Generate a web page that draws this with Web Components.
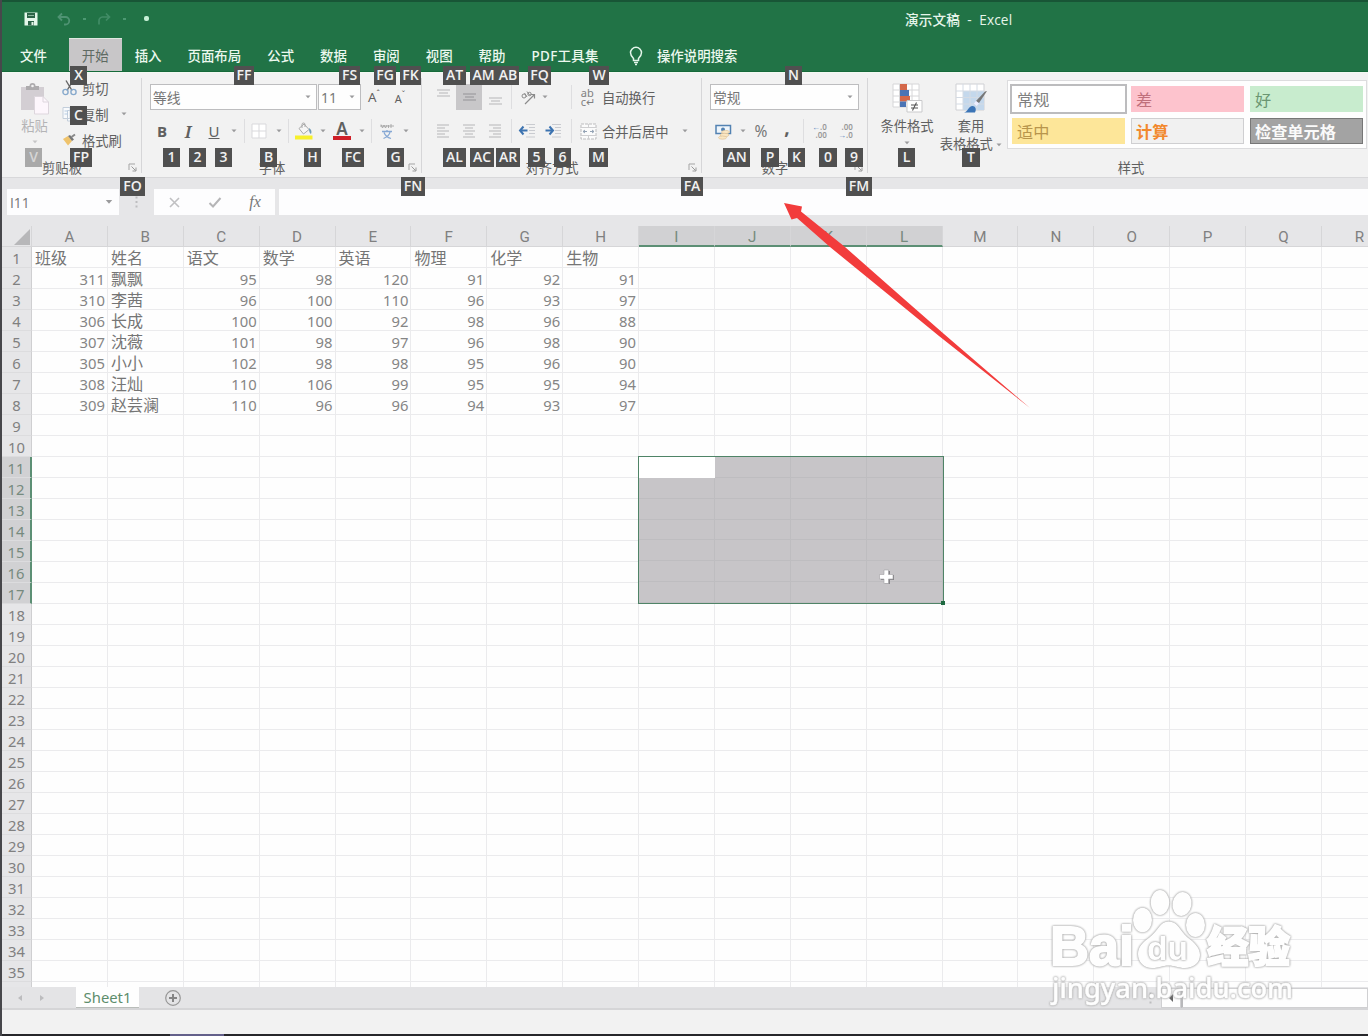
<!DOCTYPE html>
<html lang="zh-CN">
<head>
<meta charset="utf-8">
<title>演示文稿 - Excel</title>
<style>
html, body {
    margin: 0;
    height: 100%;
    overflow: hidden;
}
body {
    width: 1368px;
    height: 1036px;
    background: #2a2a2e;
    font-family: "Noto Sans", "Noto Sans CJK SC", sans-serif;
    font-size: 13.3px;
    color: #606060;
}
</style>
</head>
<body>
<excel-window></excel-window>

<script>
(function() {
    const svg = (w, h, body) => `<svg width="${w}" height="${h}" viewBox="0 0 ${w} ${h}" fill="none">${body}</svg>`;

    // horizontal strokes for the alignment buttons, as [x1, x2, y]
    const lines = (list) => svg(14, 16, list.map(([a, b, y]) => `<path d="M${a} ${y}H${b}" stroke="#c3c3c5" stroke-width="1.3"/>`).join(''));

    const ICONS = {
        save: svg(14, 14, '<path d="M.5.5H13.500V13.500H.5Z" fill="#e4f7ea"/><path d="M3 1H11V6H3Z" fill="#2c6448"/><path d="M4 3.500H10" stroke="#8fb8a0"/><path d="M4 9H10V13.500H4Z" fill="#2c6448"/><path d="M7.500 10H9.500V13H7.500Z" fill="#e4f7ea"/>'),
        undo: svg(14, 14, '<path d="M5 1.500 1.500 5 5 8.500M2 5H8.500A3.700 3.700 0 0 1 8.500 12.500H7" stroke="#4f9373" stroke-width="1.800"/>'),
        redo: svg(14, 14, '<path d="M9 1.500 12.500 5 9 8.500M12 5H5.500A3.700 3.700 0 0 0 2 9V12.500" stroke="#418c66" stroke-width="1.700"/>'),
        bulb: svg(14, 20, '<path d="M4.500 14.500V12.500C2.500 10.500 1.500 9 1.500 6.800A5.500 5.500 0 0 1 12.500 6.800C12.500 9 11.500 10.500 9.500 12.500V14.500Z" stroke="#e4f5ea" stroke-width="1.500"/><path d="M5 16.500H9M6 18.500H8" stroke="#e4f5ea" stroke-width="1.400"/>'),
        paste: svg(30, 32, '<path d="M1 4H24V27H1Z" fill="#d3ced3"/><path d="M6 7V3H9.500A3 3 0 0 1 15.500 3H19V7Z" fill="#adabad"/><circle cx="12.500" cy="3" r="1.300" fill="#f2f2f2"/><path d="M14.500 13.500H23L28.500 19V31H14.500Z" fill="#fdf6fc" stroke="#ddd6dd"/><path d="M23 13.500V19H28.500" stroke="#ddd6dd"/>'),
        cut: svg(15, 16, '<path d="M4 .5 10 10.500M11 .5 5 10.500" stroke="#666" stroke-width="1.400"/><circle cx="3.500" cy="12" r="2.600" stroke="#87a9cc" stroke-width="1.400"/><circle cx="11.500" cy="12" r="2.600" stroke="#87a9cc" stroke-width="1.400"/>'),
        copy: svg(15, 16, '<path d="M1 1.500H8V12.500H1ZM5.500 4.500H13V15H5.500Z" fill="#f8fafc" stroke="#c3cedb"/><path d="M2.500 5H6M2.500 8H6" stroke="#b5cbe2"/>'),
        brush: svg(15, 14, '<path d="M1 6 6 3 10 8 6 12.500Z" fill="#efc36c"/><path d="M6 3 8 2 12 6.500 10 8Z" fill="#777"/><path d="M9.500 4 13 1.500" stroke="#888" stroke-width="2"/>'),
        launcher: svg(9, 9, '<path d="M1 7V1H7" stroke="#a5a5a5"/><path d="M3.500 3.500 7.500 7.500M8 4.500V8H4.500" stroke="#999"/>'),
        borders: svg(16, 16, '<path d="M1 1H15V15H1ZM8 1V15M1 8H15" fill="#fff" stroke="#d9d9dc"/>'),
        fill: svg(18, 18, '<path d="M4 6.500 9 2 14 7.500 8.500 12Z" fill="#f6f6f6" stroke="#a9a9a9"/><path d="M7 6V2.500A1.500 1.500 0 0 1 10 2.500V5" stroke="#a9a9a9"/><path d="M14 6C16.500 7.500 17 9.500 16 12C14.500 11.500 14 9 14 6Z" fill="#6e9cb8"/><path d="M0 13.500H17.500V17.500H0Z" fill="#f7f02c"/>'),
        phonetic: svg(16, 17, '<path d="M1 3H15M2 1.500 3.500 5 5 2 6.500 5 8 2M9.500 5V2M12 1V5" stroke="#a5a5a5" stroke-width=".9"/><path d="M3 8.500H13M8 7V9M4.500 15.500C8 14 10.500 12 11 9M5 9.500C6 12 8.500 14.500 12 15.500" stroke="#86a8d4" stroke-width="1.300"/>'),
        top: lines([[1, 14, 1], [3, 12, 4], [1, 14, 7]]),
        middle: lines([[1, 14, 5], [3, 12, 8], [1, 14, 11]]).replace(/#c3c3c5/g, '#a0a0a2'),
        bottom: lines([[1, 14, 9], [3, 12, 12], [1, 14, 15]]),
        left: lines([[1, 13, 2], [1, 9, 5], [1, 13, 8], [1, 9, 11], [1, 13, 14]]),
        center: lines([[1, 13, 2], [3, 11, 5], [1, 13, 8], [3, 11, 11], [1, 13, 14]]),
        right: lines([[1, 13, 2], [5, 13, 5], [1, 13, 8], [5, 13, 11], [1, 13, 14]]),
        orient: svg(16, 16, '<path d="M5 15 14 6M10.500 5.500H14.500V9.500" stroke="#8b8b8b" stroke-width="1.200"/><circle cx="4" cy="7" r="2" stroke="#8b8b8b"/><path d="M4.500 4 7 8M7 2.500 10 6.500" stroke="#8b8b8b"/><circle cx="9.500" cy="5" r="1.700" stroke="#8b8b8b"/>'),
        outdent: svg(18, 16, '<path d="M8 1.500H17M11 4.500H17M11 7.500H17M11 10.500H17M8 14H17" stroke="#c9cbd0" stroke-width="1.200"/><path d="M5.500 3.500 2 7.500 5.500 11.500M2.500 7.500H9.500" stroke="#3c73b0" stroke-width="2"/>'),
        indent: svg(18, 16, '<path d="M8 1.500H17M11 4.500H17M11 7.500H17M11 10.500H17M8 14H17" stroke="#c9cbd0" stroke-width="1.200"/><path d="M5.500 3.500 9 7.500 5.500 11.500M8.500 7.500H1.500" stroke="#3c73b0" stroke-width="2"/>'),
        merge: svg(17, 17, '<path d="M1 1H16V16H1Z" fill="#fbfbfb" stroke="#bcbcbe" stroke-dasharray="3 1"/><path d="M1 4.500H16M1 12.500H16M8.500 1V4.500M8.500 12.500V16" stroke="#cfcfd1"/><path d="M3 8.500H7M10 8.500H14M5 7 3 8.500 5 10M12 7 14 8.500 12 10" stroke="#94a3b5"/>'),
        currency: svg(17, 17, '<path d="M1 2.500H15.500V10.500H1Z" fill="#eef5fb" stroke="#5382b2" stroke-width="1.500"/><circle cx="8" cy="6.500" r="2" fill="#5382b2"/><ellipse cx="10.500" cy="9" rx="4" ry="1.600" fill="#fae7c4" stroke="#dfc396" stroke-width=".7"/><ellipse cx="9.500" cy="12" rx="4.500" ry="1.700" fill="#fae7c4" stroke="#dfc396" stroke-width=".7"/><ellipse cx="7.500" cy="14.600" rx="4" ry="1.600" fill="#fae7c4" stroke="#dfc396" stroke-width=".7"/>'),
        cond: svg(31, 31, '<path d="M1 1H27V24H1Z" fill="#fff" stroke="#d6d6d8"/><path d="M1 7H27M1 13H27M1 19H27M7.500 1V24M20 1V24" stroke="#d6d6d8"/><path d="M8 1H15V7H8ZM8 13H18V18.500H8Z" fill="#d4684a"/><path d="M8 7H17V13H8ZM8 18.500H14V24H8Z" fill="#4b74b5"/><path d="M15 17.500H30V29H15Z" fill="#fff" stroke="#c9c9cb"/><path d="M19 22H26M19 25H26M24.500 19.500 20.500 27.500" stroke="#555" stroke-width="1.100"/>'),
        table: svg(33, 31, '<path d="M1 1H29V27H1Z" fill="#fff" stroke="#cfd0d4"/><path d="M8 8H29V27H8Z" fill="#c4d8ec"/><path d="M1 8H29M1 14.500H29M1 21H29M8 1V27M15 1V27M22 1V27" stroke="#d4dbe4"/><path d="M32 8 24 20 21 18 30 8.500Z" fill="#777"/><path d="M21 18 24 20.500 21.500 23 19 20.500Z" fill="#eef"/><path d="M9 29.500C13 28.500 13 24 17 23 20 22.500 22 26 20 29.500Z" fill="#3b74b6"/>'),
        cross: svg(13, 13, '<path d="M2 2 11 11M11 2 2 11" stroke="#c0c0c2" stroke-width="1.600"/>'),
        check: svg(14, 13, '<path d="M1.500 7 5 10.500 12.500 2" stroke="#b5b5b7" stroke-width="2"/>'),
        plus: svg(18, 18, '<circle cx="9" cy="9" r="7.300" stroke="#979797" stroke-width="1.200"/><path d="M9 5V13M5 9H13" stroke="#858585" stroke-width="2"/>'),
        grip: svg(3, 12, '<path d="M.5.5H2.500V2.500H.5ZM.5 5H2.500V7H.5ZM.5 9.500H2.500V11.500H.5Z" fill="#bdbdbf"/>'),
        prev: svg(6, 8, '<path d="M5 1V7L1 4Z" fill="#bcbcbe"/>'),
        next: svg(6, 8, '<path d="M1 1V7L5 4Z" fill="#bcbcbe"/>'),
        scroll: svg(6, 8, '<path d="M5 0V8L1 4Z" fill="#666"/>'),
        drop: svg(6, 4, '<path d="M.5.5H5.500L3 3.300Z" fill="#9a9a9c"/>')
    };

    /**
     * Register an element whose shadow root is cloned from a template.
     */
    function define(name, html, setup) {
        const template = document.createElement('template');
        template.innerHTML = html;

        customElements.define(name, class extends HTMLElement {
            constructor() {
                super();
                this.attachShadow({mode: 'open'});
                this.shadowRoot.appendChild(template.content.cloneNode(true));
            }

            connectedCallback() {
                if (setup) {
                    setup(this, this.shadowRoot);
                }
            }
        });
    }

    define('tool-icon', `
<style>
:host { display: inline-flex; align-items: center; justify-content: center; }
svg { display: block; }
</style>
<span></span>`, (host, root) => {
        root.querySelector('span').innerHTML = ICONS[host.getAttribute('name')];
    });

    define('tool-sep', `
<style>
:host { display: block; justify-self: center; width: 1px; height: 24px; background: #dedee0; }
</style>`);

    define('combo-box', `
<style>
:host {
    box-sizing: border-box;
    display: flex;
    align-items: center;
    justify-content: space-between;
    height: 26px;
    padding: 0 5px 0 2px;
    border: 1px solid #bdbdbf;
    background: #fefefe;
    color: #777;
    font-size: 13.8px;
}
</style>
<slot></slot><tool-icon name="drop"></tool-icon>`);

    define('key-tip', `
<style>
:host {
    position: absolute;
    box-sizing: border-box;
    height: 19px;
    background: #505050;
    color: #f1f1f1;
    font: 600 14px/18px "Open Sans", "Noto Sans", sans-serif;
    text-align: center;
    white-space: nowrap;
    z-index: 2;
}
:host([faded]) { background: #a9a9a9; color: #d6d6d6; }
</style>
<slot></slot>`);

    define('title-bar', `
<style>
:host { display: flex; align-items: center; height: 38px; box-sizing: border-box; border-top: 2px solid #185536; padding-bottom: 3px; background: #217346; color: #e6f5ea; }
.quick { display: grid; grid-template-columns: 23px 38px 8px 32px 8px 36px; justify-items: center; align-items: center; width: 180px; padding-left: 17px; box-sizing: border-box; }
.quick tool-icon[name=undo] { margin-left: 6px; }
.dot { width: 3px; height: 2px; background: #4c9872; }
.dot.on { width: 5px; height: 5px; border-radius: 2px; background: #c6f0d6; }
.name { margin-left: 723px; white-space: pre; font-size: 13.6px; font-weight: 500; letter-spacing: .15px; font-family: "Open Sans", "Noto Sans CJK SC", sans-serif; }
</style>
<div class="quick">
    <tool-icon name="save"></tool-icon>
    <tool-icon name="undo"></tool-icon>
    <i class="dot"></i>
    <tool-icon name="redo"></tool-icon>
    <i class="dot"></i>
    <i class="dot on"></i>
</div>
<div class="name">演示文稿  -  Excel</div>`);

    define('ribbon-tabs', `
<style>
:host { display: flex; height: 34px; background: #217346; color: #ecf8ef; font-weight: 500; border-bottom: 1px solid #166a3a; box-sizing: border-box; }
span { display: flex; align-items: center; padding: 0 13px; white-space: nowrap; font-size: 13.430px; }
.file { padding: 0 20px 0 18px; margin-right: 2px; }
.on { background: #c8c6c8; color: #5e6a62; font-weight: 400; box-shadow: inset 0 1px #dfe8e0; }
.pdf { letter-spacing: .35px; }
tool-icon { margin: 2px 1px 0 17px; }
</style>
<span class="file">文件</span><span class="on">开始</span><span>插入</span><span>页面布局</span><span>公式</span><span>数据</span><span>审阅</span><span>视图</span><span>帮助</span><span class="pdf">PDF工具集</span>
<tool-icon name="bulb"></tool-icon><span>操作说明搜索</span>`);

    define('ribbon-group', `
<style>
:host { display: grid; grid-template-rows: 84px 20px; box-sizing: border-box; position: relative; flex: none; }
:host(:not([last]))::after { content: ""; position: absolute; right: 0; top: 5px; bottom: 4px; width: 1px; background: #d6d6d8; }
footer { display: flex; align-items: center; padding-right: var(--launcher-gap, 0); }
b { flex: 1; text-align: center; font-weight: 400; color: #606060; font-size: 13.3px; }
footer tool-icon { width: 20px; margin-top: 1px; }
:host([last]) footer tool-icon { display: none; }
</style>
<slot></slot>
<footer><b></b><tool-icon name="launcher"></tool-icon></footer>`, (host, root) => {
        root.querySelector('b').textContent = host.getAttribute('label');
    });

    define('style-swatch', `
<style>
:host { box-sizing: border-box; display: flex; align-items: center; padding-left: 4px; height: 26px; font-size: 16.200px; white-space: nowrap; border: 1px solid transparent; }
:host([on]) { background: #fff; outline: 2px solid #bcbcbe; color: #808080; }
</style>
<slot></slot>`);

    define('ribbon-bar', `
<style>
:host { display: flex; height: 105px; box-sizing: border-box; background: #f2f2f2; border-top: 1px solid #f2f8f2; overflow: hidden; }
.clip { display: grid; grid-template-columns: 60px 1fr; }
.big { display: flex; flex-direction: column; align-items: center; white-space: nowrap; }
.big > span { line-height: 18px; }
.small { display: grid; grid-template-rows: repeat(3, 26px); padding-top: 2px; }
.small div { display: grid; grid-template-columns: 20px 35px 14px; align-items: center; white-space: nowrap; }
.rows { padding: 11px 8px 0; display: grid; grid-template-rows: 26px 26px; row-gap: 8px; align-content: start; }
.row { display: grid; align-items: center; justify-items: center; justify-content: start; }
.row combo-box { width: 100%; }
.row > b { font: 700 15px "Open Sans", sans-serif; }
.row > i { font: italic 600 17px "Noto Serif", "Liberation Serif", serif; }
.row > u { font: 15px "Noto Sans", sans-serif; text-decoration: underline; }
.mark { display: flex; align-items: center; justify-content: center; width: 26px; height: 26px; background: #c8c7c9; }
.txt { justify-self: start; white-space: nowrap; }
.acol { border-bottom: 4px solid #cf1f28; width: 18px; text-align: center; font: 600 17px/14px "Noto Sans", sans-serif; }
.dec { display: grid; grid-template-rows: 8px 8px; font: 600 8px/8px "Noto Sans", sans-serif; text-align: right; color: #999; }
.dec em { font-style: normal; color: #5b88bd; }
.wrapab { display: grid; grid-template-rows: 9px 9px; font: 11px/9px "Noto Sans", sans-serif; color: #808080; }
.styles { display: grid; grid-template-columns: 6px 66px 62px 1fr; }
.gallery { box-sizing: border-box; display: grid; grid-template-columns: repeat(3, 112.500px); gap: 6.500px; align-content: start; width: 360px; height: 69px; margin: 7px 0 0 5px; padding: 4.500px 0 0 4px; background: #fefefe; border: 1px solid #dcdcde; }
</style>
<ribbon-group label="剪贴板" style="width:140px">
    <div class="clip">
        <div class="big" style="padding-top:10px; padding-left:5px; color:#b4b4b6">
            <tool-icon name="paste"></tool-icon><span style="margin-top:2px">粘贴</span>
            <tool-icon name="drop" style="margin-top:5px; opacity:.5"></tool-icon>
        </div>
        <div class="small">
            <div><tool-icon name="cut" style="justify-self:start"></tool-icon>剪切</div>
            <div><tool-icon name="copy" style="justify-self:start"></tool-icon>复制<tool-icon name="drop"></tool-icon></div>
            <div><tool-icon name="brush" style="justify-self:start"></tool-icon><span>格式刷</span></div>
        </div>
    </div>
</ribbon-group>
<ribbon-group label="字体" style="width:280px">
    <div class="rows">
        <div class="row" style="grid-template-columns:167px 1px 43px 26px 26px">
            <combo-box>等线</combo-box><i></i><combo-box>11</combo-box>
            <span>A<sup style="font-size:8px">ˆ</sup></span><span style="font-size:11px">A<sup style="font-size:8px">ˇ</sup></span>
        </div>
        <div class="row" style="grid-template-columns:24px 28px 24px 16px 4px 26px 14px 4px 27px 12px 26px 14px 4px 28px 10px">
            <b>B</b><i>I</i><u>U</u><tool-icon name="drop"></tool-icon><tool-sep></tool-sep>
            <tool-icon name="borders"></tool-icon><tool-icon name="drop"></tool-icon><tool-sep></tool-sep>
            <tool-icon name="fill"></tool-icon><tool-icon name="drop"></tool-icon>
            <span class="acol">A</span><tool-icon name="drop"></tool-icon><tool-sep></tool-sep>
            <tool-icon name="phonetic"></tool-icon><tool-icon name="drop"></tool-icon>
        </div>
    </div>
</ribbon-group>
<ribbon-group label="对齐方式" style="width:280px; --launcher-gap:6px">
    <div class="rows">
        <div class="row" style="grid-template-columns:26px 26px 26px 6px 28px 6px 21px 5px 28px 60px">
            <tool-icon name="top"></tool-icon><div class="mark"><tool-icon name="middle"></tool-icon></div><tool-icon name="bottom"></tool-icon><tool-sep></tool-sep>
            <tool-icon name="orient"></tool-icon><tool-icon name="drop"></tool-icon><i></i><tool-sep></tool-sep>
            <span class="wrapab"><span>ab</span><span>c↵</span></span><span class="txt">自动换行</span>
        </div>
        <div class="row" style="grid-template-columns:26px 26px 26px 6px 26px 26px 3px 5px 28px 68px 30px">
            <tool-icon name="left"></tool-icon><tool-icon name="center"></tool-icon><tool-icon name="right"></tool-icon><tool-sep></tool-sep>
            <tool-icon name="outdent"></tool-icon><tool-icon name="indent"></tool-icon><i></i><tool-sep></tool-sep>
            <tool-icon name="merge"></tool-icon><span class="txt">合并后居中</span><tool-icon name="drop"></tool-icon>
        </div>
    </div>
</ribbon-group>
<ribbon-group label="数字" style="width:166px">
    <div class="rows">
        <div class="row" style="grid-template-columns:149px"><combo-box>常规</combo-box></div>
        <div class="row" style="grid-template-columns:26px 13px 24px 28px 5px 27px 25px">
            <tool-icon name="currency"></tool-icon><tool-icon name="drop"></tool-icon>
            <span style="font-size:15.5px; color:#777">%</span><b style="font-size:19px; line-height:14px; margin-top:-8px">,</b><tool-sep></tool-sep>
            <span class="dec"><span><em>←</em>.0</span><span>.00</span></span><span class="dec"><span>.00</span><span><em>→</em>.0</span></span>
        </div>
    </div>
</ribbon-group>
<ribbon-group label="样式" last style="width:526px">
    <div class="styles">
        <i></i>
        <div class="big" style="padding-top:10px">
            <tool-icon name="cond"></tool-icon><span style="margin-top:3px">条件格式</span><tool-icon name="drop" style="margin-top:6px"></tool-icon>
        </div>
        <div class="big" style="padding-top:10px">
            <tool-icon name="table"></tool-icon><span style="margin-top:3px">套用</span><span>表格格式 <tool-icon name="drop" style="vertical-align:2px"></tool-icon></span>
        </div>
        <div class="gallery">
            <style-swatch on>常规</style-swatch>
            <style-swatch style="background:#fdc3cd; color:#c0707c">差</style-swatch>
            <style-swatch style="background:#c8ecce; color:#6b9672">好</style-swatch>
            <style-swatch style="background:#fde699; color:#b8954c">适中</style-swatch>
            <style-swatch style="background:#f1f1f1; border-color:#cfcfd1; color:#f2892e; font-weight:700">计算</style-swatch>
            <style-swatch style="background:#a3a3a3; border-color:#777; color:#fafafa; font-weight:700">检查单元格</style-swatch>
        </div>
    </div>
</ribbon-group>`);

    define('formula-bar', `
<style>
:host { display: grid; grid-template-columns: 112px 35px 121px 1fr; height: 49px; box-sizing: border-box; padding: 11px 0 11px 5px; background: #e6e6e8; border-top: 1px solid #d8d8da; }
div { display: flex; align-items: center; background: #fdfdfe; }
.name { justify-content: space-between; padding: 0 7px 0 3px; color: #757575; font: 13.8px "Open Sans", sans-serif; }
.dots { background: none; justify-content: center; }
.fx { display: grid; grid-template-columns: 40px 41px 40px; justify-items: center; }
.fx em { font: italic 16px "Liberation Serif", serif; color: #777; }
.entry { margin-left: 4px; }
</style>
<div class="name">I11<tool-icon name="drop" style="transform:scale(1.3)"></tool-icon></div>
<div class="dots"><tool-icon name="grip"></tool-icon></div>
<div class="fx"><tool-icon name="cross"></tool-icon><tool-icon name="check"></tool-icon><em>fx</em></div>
<div class="entry"></div>`);

    const ROWS = [
        ['班级', '姓名', '语文', '数学', '英语', '物理', '化学', '生物'],
        [311, '飘飘', 95, 98, 120, 91, 92, 91],
        [310, '李茜', 96, 100, 110, 96, 93, 97],
        [306, '长成', 100, 100, 92, 98, 96, 88],
        [307, '沈薇', 101, 98, 97, 96, 98, 90],
        [305, '小小', 102, 98, 98, 95, 96, 90],
        [308, '汪灿', 110, 106, 99, 95, 95, 94],
        [309, '赵芸澜', 110, 96, 96, 94, 93, 97]
    ];

    define('sheet-grid', `
<style>
:host { display: block; position: relative; height: 761px; overflow: hidden; background: #fefefe; font-size: 14.8px; }
.grid { display: grid; grid-template-columns: 30px repeat(18, 75.880px); grid-auto-rows: 21px; }
.grid > div { box-sizing: border-box; border-right: 1px solid #ebebed; border-bottom: 1px solid #ebebed; line-height: 23px; padding: 0 2px 0 3px; white-space: nowrap; color: #777; }
.grid > .n { text-align: right; color: #858585; }
.grid > .t { font-size: 16px; line-height: 22px; color: #757575; }
.grid > .h { background: #e6e6e8; color: #808080; text-align: center; padding: 0; border-color: #d6d6d8; line-height: 23px; }
.grid > .c { font: 15.200px/23px Roboto, sans-serif; }
.grid > .r { border-right-color: #cfcfd1; border-bottom-color: #dcdcde; }
.grid > .hs { background: #d1d1d3; border-bottom: 2px solid #5c8f74; color: #768a7e; }
.grid > .rs { background: #d1d1d3; border-right: 2px solid #5c8f74; color: #768a7e; }
.corner { display: flex; align-items: flex-end; justify-content: flex-end; }
.corner svg { margin: 0 1px 1px 0; }
.range { position: absolute; left: 636px; top: 230px; width: 306px; height: 148px; box-sizing: border-box; border: 1.500px solid #4f8467; display: grid; grid-template-columns: repeat(4, 1fr); grid-auto-rows: 1fr; background: #c7c5c8; }
.range i { border-right: 1px solid #bebdc0; border-bottom: 1px solid #bebdc0; }
.range i:first-child { background: #fff; border-color: #fff; }
.range b { position: absolute; right: -2px; bottom: -2px; width: 4px; height: 4px; background: #1f6a42; }
.cursor { position: absolute; left: 876px; top: 342px; }
</style>
<div class="grid"></div>
<div class="range"></div>
<svg class="cursor" width="18" height="18" viewBox="0 0 18 18"><path d="M7 3H12V7H16V12H12V16H7V12H3V7H7Z" fill="#858387"/><path d="M6 2H10.500V6.500H15V11H10.500V15.500H6V11H1.500V6.500H6Z" fill="#fff" stroke="#a3a1a5" stroke-width=".6"/></svg>`, (host, root) => {
        let html = '<div class="h corner"><svg width="16" height="16"><path d="M16 0V16H0Z" fill="#b7b7b9"/></svg></div>';
        for (let c = 0; c < 18; c++) {
            html += `<div class="h c${c > 7 && c < 12 ? ' hs' : ''}">${String.fromCharCode(65 + c)}</div>`;
        }
        for (let r = 0; r < 36; r++) {
            html += `<div class="h r${r > 9 && r < 17 ? ' rs' : ''}">${r < 35 ? r + 1 : ''}</div>`;
            for (let c = 0; c < 18; c++) {
                const value = ROWS[r] && ROWS[r][c] !== undefined ? ROWS[r][c] : '';
                html += `<div class="${typeof value === 'number' ? 'n' : 't'}">${value}</div>`;
            }
        }
        root.querySelector('.grid').innerHTML = html;
        root.querySelector('.range').innerHTML = '<i></i>'.repeat(28) + '<b></b>';
    });

    define('sheet-tabs', `
<style>
:host { display: grid; grid-template-columns: 74px 63px 67px 1fr 10px 6px 20px 187px; align-items: center; height: 23px; box-sizing: border-box; background: #e4e4e6; border-bottom: 2px solid #d5d5d7; }
.nav { display: flex; gap: 16px; padding-left: 15px; }
.tab { display: flex; align-items: center; justify-content: center; align-self: stretch; background: #fefefe; border-bottom: 1px solid #b9bdba; color: #5d8d6c; font-size: 14.800px; }
.btn, .track { box-sizing: border-box; height: 20px; background: #fefefe; border: 1px solid #d0d0d2; display: flex; align-items: center; justify-content: center; }
.track { border-left: 2px solid #b9b9bb; }
</style>
<div class="nav"><tool-icon name="prev"></tool-icon><tool-icon name="next"></tool-icon></div>
<div class="tab">Sheet1</div>
<tool-icon name="plus"></tool-icon>
<i></i><tool-icon name="grip"></tool-icon><i></i>
<div class="btn"><tool-icon name="scroll"></tool-icon></div>
<div class="track"></div>`);

    define('status-bar', `
<style>
:host { display: block; height: 24px; background: #f2f2f2; }
</style>`);

    // white outlined mark in the lower right corner
    define('corner-mark', `
<style>
:host { position: absolute; left: 1040px; top: 880px; z-index: 3; }
svg { display: block; }
.soft { filter: drop-shadow(0 0 .8px #aaa) drop-shadow(0 0 .3px #bbb); }
</style>
<svg width="270" height="130" viewBox="1040 880 270 130" fill="#fefefe">
    <g class="soft">
        <ellipse cx="1142.500" cy="920" rx="9.500" ry="12.200"/>
        <ellipse cx="1160" cy="902.500" rx="9.300" ry="12.500"/>
        <ellipse cx="1182" cy="904" rx="9.500" ry="12" transform="rotate(10 1182 904)"/>
        <ellipse cx="1195.500" cy="925" rx="9.500" ry="12"/>
        <path d="M1168.500 921.500C1178 921.500 1180 931 1187 937C1195 943 1200 948 1200 955C1200 963 1193 968 1185 968C1178 968 1175 965.500 1168.500 965.500C1162 965.500 1160 968 1152 968C1144 968 1138 962 1138 954C1138 947 1143 942 1150 937C1158 931 1160 921.500 1168.500 921.500Z"/>
    </g>
    <g class="soft" stroke="#fefefe" stroke-width="2">
        <text x="1050" y="965" font-family="Liberation Sans, Arial, sans-serif" font-weight="700" font-size="56" textLength="84" lengthAdjust="spacingAndGlyphs">Bai</text>
        <text x="1207" y="962" font-family="Noto Sans CJK SC, sans-serif" font-size="42" font-weight="900" textLength="83" lengthAdjust="spacingAndGlyphs">经验</text>
    </g>
    <text class="soft" x="1147" y="960" font-family="Liberation Sans, Arial, sans-serif" font-size="34" font-weight="700" textLength="41" lengthAdjust="spacingAndGlyphs">du</text>
    <text class="soft" x="1052" y="998" font-family="Noto Sans, sans-serif" font-size="27" font-weight="500" textLength="241" lengthAdjust="spacingAndGlyphs" stroke="#fefefe" stroke-width=".5">jingyan.baidu.com</text>
</svg>`);

    define('red-arrow', `
<style>
:host { position: absolute; left: 780px; top: 198px; z-index: 4; }
svg { display: block; }
</style>
<svg width="255" height="215" viewBox="780 198 255 215"><path d="M784 203 802 206.500 801 211.500 845 247 904 299 944 334 1030 408 939 336 895 300 830 247 797 218 791.500 219.500Z" fill="#f23c3c"/></svg>`);

    // key tip text, left, width and top
    const TIPS = [
        ['X', 70, 17, 66], ['FF', 234, 20, 66], ['FS', 339, 21, 66], ['FG', 374, 22, 66], ['FK', 400, 21, 66],
        ['AT', 443, 23, 66], ['AM', 470, 27, 66], ['AB', 497, 22, 66], ['FQ', 528, 23, 66], ['W', 589, 20, 66], ['N', 785, 17, 66],
        ['C', 70, 17, 106],
        ['V', 25, 17, 148], ['FP', 70, 22, 148], ['1', 163, 17, 148], ['2', 189, 17, 148], ['3', 215, 17, 148],
        ['B', 260, 17, 148], ['H', 304, 17, 148], ['FC', 342, 22, 148], ['G', 387, 17, 148],
        ['AL', 443, 23, 148], ['AC', 470, 24, 148], ['AR', 496, 24, 148], ['5', 528, 17, 148], ['6', 554, 17, 148], ['M', 589, 19, 148],
        ['AN', 723, 27, 148], ['P', 761, 18, 148], ['K', 788, 17, 148], ['0', 819, 18, 148], ['9', 845, 18, 148], ['L', 898, 17, 148], ['T', 962, 18, 148],
        ['FO', 120, 25, 177], ['FN', 401, 24, 177], ['FA', 681, 22, 177], ['FM', 846, 26, 177]
    ];

    define('excel-window', `
<style>
:host { display: flex; flex-direction: column; box-sizing: border-box; position: relative; width: 1368px; height: 1036px; border-left: 2px solid #47474b; overflow: hidden; }
.tips { position: absolute; left: -2px; top: 0; }
.base { flex: 1; background: linear-gradient(90deg, #26262a 168px, #63608a 168px, #63608a 222px, #26262a 222px); }
</style>
<title-bar></title-bar>
<ribbon-tabs></ribbon-tabs>
<ribbon-bar></ribbon-bar>
<formula-bar></formula-bar>
<sheet-grid></sheet-grid>
<sheet-tabs></sheet-tabs>
<status-bar></status-bar>
<div class="base"></div>
<div class="tips">
    <corner-mark></corner-mark>
    <red-arrow></red-arrow>
</div>`, (host, root) => {
        const layer = root.querySelector('.tips');
        TIPS.forEach(([text, left, width, top]) => {
            const tip = document.createElement('key-tip');
            tip.textContent = text;
            tip.style.cssText = `left:${left}px;width:${width}px;top:${top}px`;
            if (text === 'V') {
                tip.setAttribute('faded', '');
            }
            layer.appendChild(tip);
        });
    });
})();
</script>
</body>
</html>
